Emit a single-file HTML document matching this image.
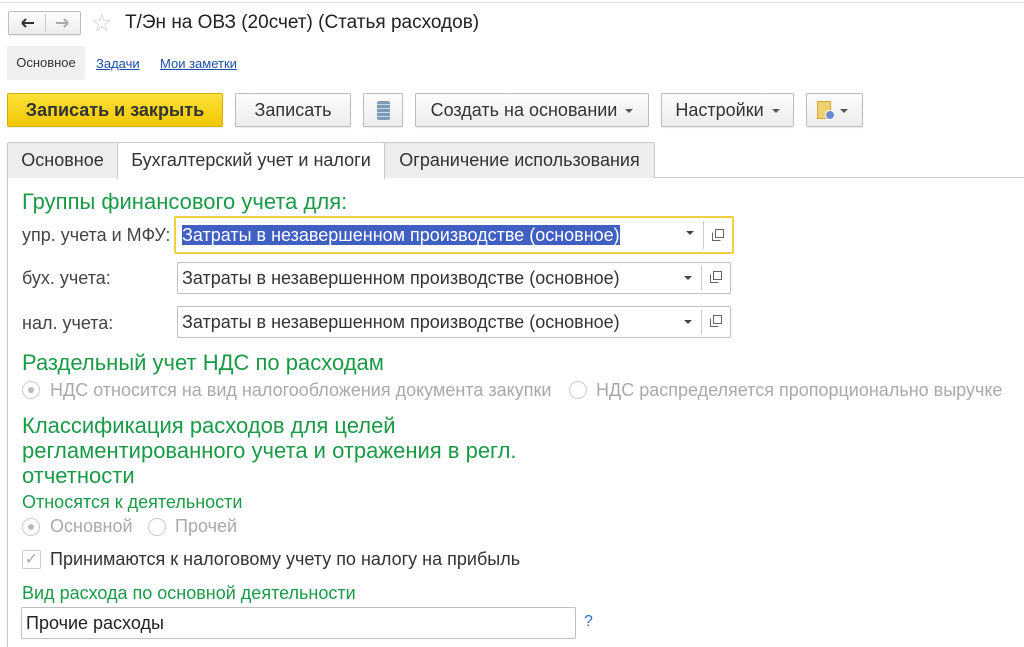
<!DOCTYPE html>
<html><head><meta charset="utf-8"><style>
*{box-sizing:border-box;margin:0;padding:0}
body{width:1024px;height:647px;background:#fff;font-family:"Liberation Sans",Arial,sans-serif;color:#333;position:relative;overflow:hidden}
.a{position:absolute;white-space:nowrap}
.btn{position:absolute;border:1px solid #bdbdbd;border-radius:2px;background:linear-gradient(#fdfdfd,#ececec);font-size:18px;color:#333;text-align:center;line-height:32px;height:34px;box-shadow:0 1px 1px rgba(0,0,0,.08)}
.g{color:#1a9a47}
.tab{position:absolute;top:142px;height:36px;border:1px solid #c8c8c8;border-bottom:none;background:#ededed;font-size:18px;line-height:34px;text-align:center;border-radius:2px 2px 0 0}
.fld{position:absolute;height:32px;border:1px solid #bfbfbf;border-radius:2px;background:#fff;font-size:18px;line-height:30px;padding-left:4px}
.fld .dd{position:absolute;right:28px;top:3px;bottom:3px;width:1px;background:#ccc}
.fld .ar{position:absolute;right:38px;top:13px;border-left:4px solid transparent;border-right:4px solid transparent;border-top:4px solid #444}
.fld .cp{position:absolute;right:8px;top:8px;width:12px;height:12px}
.lab{position:absolute;font-size:18px;color:#444}
.rad{position:absolute;width:18px;height:18px;border:1px solid #ccc;border-radius:50%;background:#fff}
.rad.on::after{content:"";position:absolute;left:5px;top:5px;width:6px;height:6px;border-radius:50%;background:#bbb}
.dis{color:#a9a9a9;font-size:18px}
.caret{display:inline-block;border-left:4px solid transparent;border-right:4px solid transparent;border-top:4px solid #555;vertical-align:middle;margin-left:8px}
</style></head><body>
<div class="a" style="left:0;top:0;width:1024px;height:3px;border-bottom:1px solid #ddd"></div>
<div class="btn" style="left:8px;top:11px;width:73px;height:24px"><svg style="position:absolute;left:12px;top:6px" width="14" height="10" viewBox="0 0 14 10"><path d="M1 5h12M1 5l4-4M1 5l4 4" stroke="#333" stroke-width="2" fill="none"/></svg><span style="position:absolute;left:36px;top:2px;bottom:2px;width:1px;background:#ccc"></span><svg style="position:absolute;left:46px;top:6px" width="14" height="10" viewBox="0 0 14 10"><path d="M1 5h12M13 5l-4-4M13 5l-4 4" stroke="#aaa" stroke-width="2" fill="none"/></svg></div>
<div class="a" style="left:91px;top:9px;font-size:24px;color:#ccc">☆</div>
<div class="a" style="left:125px;top:12px;font-size:19px;color:#222">Т/Эн на ОВЗ (20счет) (Статья расходов)</div>
<div class="a" style="left:7px;top:46px;width:78px;height:34px;background:#f0f0f0;border-radius:2px;font-size:13px;line-height:34px;text-align:center;color:#333">Основное</div>
<div class="a" style="left:96px;top:56px;font-size:13px;color:#1b4fa8;text-decoration:underline">Задачи</div>
<div class="a" style="left:160px;top:56px;font-size:13px;color:#1b4fa8;text-decoration:underline">Мои заметки</div>
<div class="btn" style="left:7px;top:93px;width:216px;background:linear-gradient(#fbe23a,#f1c700);border-color:#d4ad00;font-weight:bold;color:#333">Записать и закрыть</div>
<div class="btn" style="left:235px;top:93px;width:116px">Записать</div>
<div class="btn" style="left:363px;top:93px;width:40px"><span style="position:absolute;left:13px;top:7px;width:13px;height:19px;background:repeating-linear-gradient(#7d9ab8 0 3px,#c9d6e3 3px 4px);border-radius:2px"></span></div>
<div class="btn" style="left:415px;top:93px;width:234px">Создать на основании<span class="caret"></span></div>
<div class="btn" style="left:661px;top:93px;width:133px">Настройки<span class="caret"></span></div>
<div class="btn" style="left:806px;top:93px;width:57px"><span style="position:absolute;left:10px;top:7px;width:14px;height:18px;background:#f0d170;border:1px solid #d6a93a"></span><span style="position:absolute;left:18px;top:16px;width:10px;height:10px;border-radius:50%;background:#6a8ad0;border:1px solid #fff"></span><span class="caret" style="position:absolute;left:33px;top:15px;margin:0"></span></div>
<div class="a" style="left:384px;top:177px;width:640px;height:1px;background:#c8c8c8"></div>
<div class="a" style="left:7px;top:177px;width:1px;height:470px;background:#c8c8c8"></div>
<div class="tab" style="left:7px;width:111px">Основное</div>
<div class="tab" style="left:117px;width:268px;background:#fff;height:37px;z-index:2">Бухгалтерский учет и налоги</div>
<div class="tab" style="left:384px;width:271px">Ограничение использования</div>
<div class="a g" style="left:22px;top:189px;font-size:22px">Группы финансового учета для:</div>
<div class="lab" style="left:22px;top:225px">упр. учета и МФУ:</div>
<div class="lab" style="left:22px;top:268px">бух. учета:</div>
<div class="lab" style="left:22px;top:313px">нал. учета:</div>
<div class="fld" style="left:174px;top:216px;width:560px;height:38px;border:2px solid #f0d040;line-height:34px;padding-left:6px"><span style="background:#3f5fc3;color:#fff">Затраты в незавершенном производстве (основное)</span><span class="dd"></span><span class="ar"></span><svg class="cp" style="top:11px" viewBox="0 0 12 12"><rect x="3.5" y="0.5" width="8" height="8" fill="none" stroke="#666"/><path d="M0.5 3.5v8h8" fill="none" stroke="#666"/></svg></div>
<div class="fld" style="left:177px;top:262px;width:554px">Затраты в незавершенном производстве (основное)<span class="dd"></span><span class="ar"></span><svg class="cp" viewBox="0 0 12 12"><rect x="3.5" y="0.5" width="8" height="8" fill="none" stroke="#666"/><path d="M0.5 3.5v8h8" fill="none" stroke="#666"/></svg></div>
<div class="fld" style="left:177px;top:306px;width:554px">Затраты в незавершенном производстве (основное)<span class="dd"></span><span class="ar"></span><svg class="cp" viewBox="0 0 12 12"><rect x="3.5" y="0.5" width="8" height="8" fill="none" stroke="#666"/><path d="M0.5 3.5v8h8" fill="none" stroke="#666"/></svg></div>
<div class="a g" style="left:22px;top:350px;font-size:22px">Раздельный учет НДС по расходам</div>
<div class="rad on" style="left:22px;top:381px"></div>
<div class="a dis" style="left:50px;top:380px">НДС относится на вид налогообложения документа закупки</div>
<div class="rad" style="left:569px;top:381px"></div>
<div class="a dis" style="left:596px;top:380px">НДС распределяется пропорционально выручке</div>
<div class="a g" style="left:22px;top:413px;font-size:22px;line-height:25px">Классификация расходов для целей<br>регламентированного учета и отражения в регл.<br>отчетности</div>
<div class="a g" style="left:22px;top:492px;font-size:18px">Относятся к деятельности</div>
<div class="rad on" style="left:22px;top:518px"></div>
<div class="a dis" style="left:50px;top:516px">Основной</div>
<div class="rad" style="left:148px;top:518px"></div>
<div class="a dis" style="left:175px;top:516px">Прочей</div>
<div class="a" style="left:22px;top:550px;width:19px;height:19px;border:1px solid #ccc;border-radius:2px;color:#aaa;font-size:16px;line-height:17px;text-align:center">✓</div>
<div class="a" style="left:50px;top:549px;font-size:18px;color:#333">Принимаются к налоговому учету по налогу на прибыль</div>
<div class="a g" style="left:22px;top:583px;font-size:18px">Вид расхода по основной деятельности</div>
<div class="fld" style="left:21px;top:607px;width:555px;color:#222">Прочие расходы</div>
<div class="a" style="left:584px;top:613px;font-size:16px;color:#2a6fbf">?</div>
</body></html>
